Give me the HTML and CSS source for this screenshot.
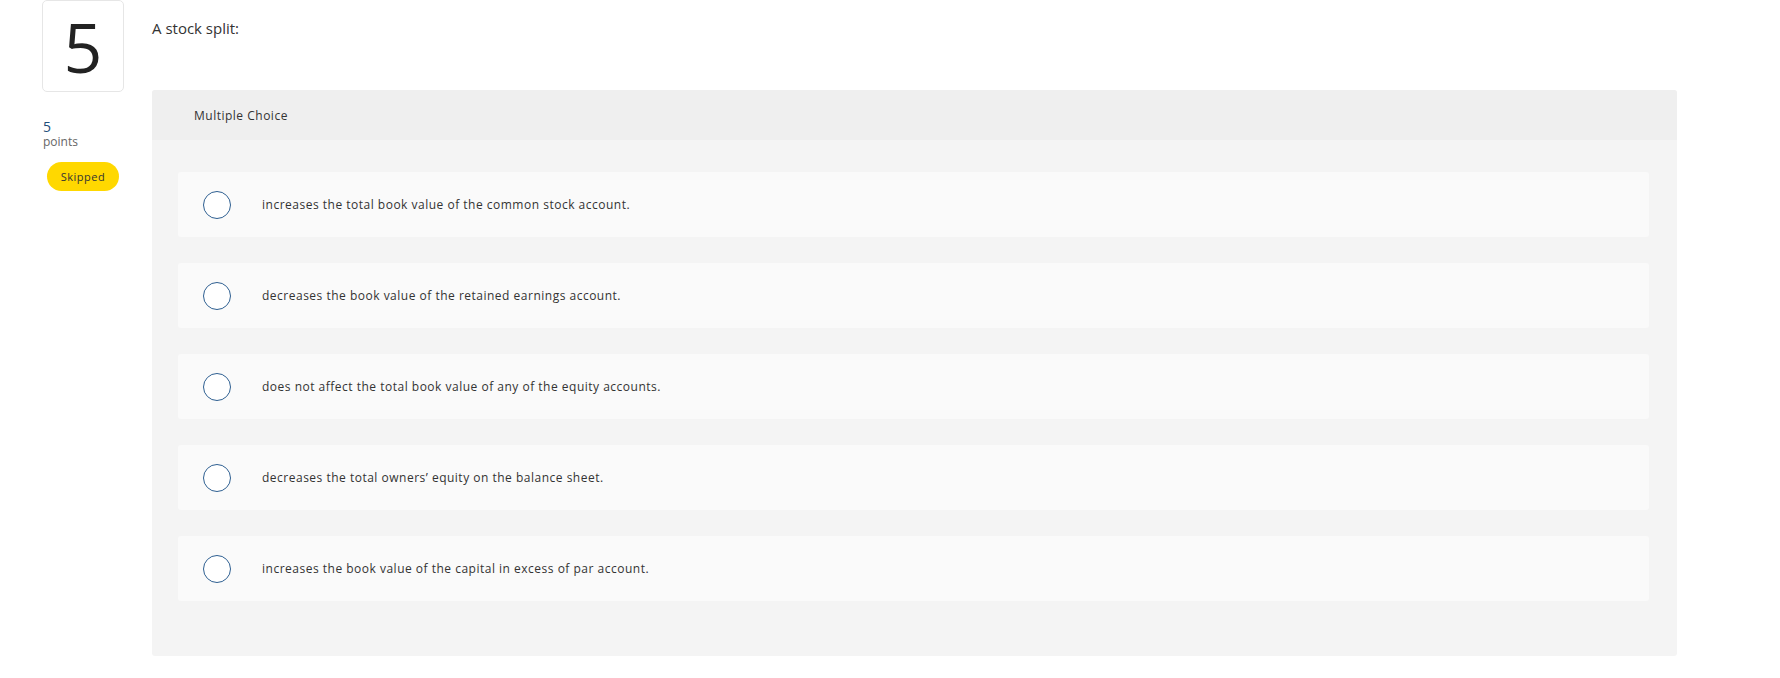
FILE: index.html
```html
<!DOCTYPE html>
<html lang="en">
<head>
<meta charset="utf-8">
<title>Question 5</title>
<link rel="stylesheet" href="styles.css">
</head>
<body>
<div class="page">
  <aside class="side">
    <div class="qnum">5</div>
    <div class="points">
      <div class="points-val">5</div>
      <div class="points-label">points</div>
    </div>
    <div class="badge">Skipped</div>
  </aside>
  <main class="main">
    <p class="prompt">A stock split:</p>
    <section class="panel">
      <header class="panel-head">Multiple Choice</header>
      <div class="panel-body">
        <label class="option"><span class="radio"></span><span class="opt-text">increases the total book value of the common stock account.</span></label>
        <label class="option"><span class="radio"></span><span class="opt-text">decreases the book value of the retained earnings account.</span></label>
        <label class="option"><span class="radio"></span><span class="opt-text">does not affect the total book value of any of the equity accounts.</span></label>
        <label class="option"><span class="radio"></span><span class="opt-text">decreases the total owners’ equity on the balance sheet.</span></label>
        <label class="option"><span class="radio"></span><span class="opt-text">increases the book value of the capital in excess of par account.</span></label>
      </div>
    </section>
  </main>
</div>
</body>
</html>
```
FILE: styles.css
```css
* { box-sizing: border-box; }
html, body { margin: 0; padding: 0; background: #ffffff; }
body {
  font-family: "Open Sans", "Liberation Sans", sans-serif;
  color: #333333;
}
.page {
  display: flex;
  align-items: flex-start;
  padding-left: 42px;
}
.side {
  width: 82px;
  flex: none;
  display: flex;
  flex-direction: column;
}
.qnum {
  width: 82px;
  height: 92px;
  border: 1px solid #e6e6e6;
  border-radius: 5px;
  display: flex;
  align-items: center;
  justify-content: center;
  padding-top: 2px;
  font-size: 68px;
  font-weight: 400;
  color: #222222;
  line-height: 1;
}
.points { margin-top: 28px; padding-left: 1px; }
.points-val { font-size: 14px; line-height: 14px; color: #1f4e7a; }
.points-label { font-size: 12px; line-height: 16px; color: #666666; }
.badge {
  margin-top: 12px;
  margin-left: 5px;
  width: 72px;
  height: 29px;
  border-radius: 15px;
  background: #ffd800;
  color: #333333;
  font-size: 11px;
  letter-spacing: 0.5px;
  display: flex;
  align-items: center;
  justify-content: center;
}
.main {
  margin-left: 28px;
  width: 1525px;
  flex: none;
}
.prompt {
  margin: 0;
  padding-top: 18px;
  font-size: 15px;
  line-height: 20px;
  height: 90px;
  color: #333333;
}
.panel {
  background: #f4f4f4;
  border-radius: 3px;
  overflow: hidden;
}
.panel-head {
  height: 50px;
  background: #efefef;
  padding-left: 42px;
  display: flex;
  align-items: center;
  font-size: 12px;
  letter-spacing: 0.5px;
  color: #333333;
}
.panel-body {
  padding: 32px 28px 55px 26px;
  display: flex;
  flex-direction: column;
  gap: 26px;
}
.option {
  height: 65px;
  background: #fafafa;
  border-radius: 3px;
  display: flex;
  align-items: center;
  padding-left: 25px;
}
.radio {
  width: 28px;
  height: 28px;
  border: 1.5px solid #2e5f91;
  border-radius: 50%;
  background: #ffffff;
  flex: none;
}
.opt-text {
  margin-left: 31px;
  font-size: 12px;
  letter-spacing: 0.5px;
  color: #333333;
}
```
